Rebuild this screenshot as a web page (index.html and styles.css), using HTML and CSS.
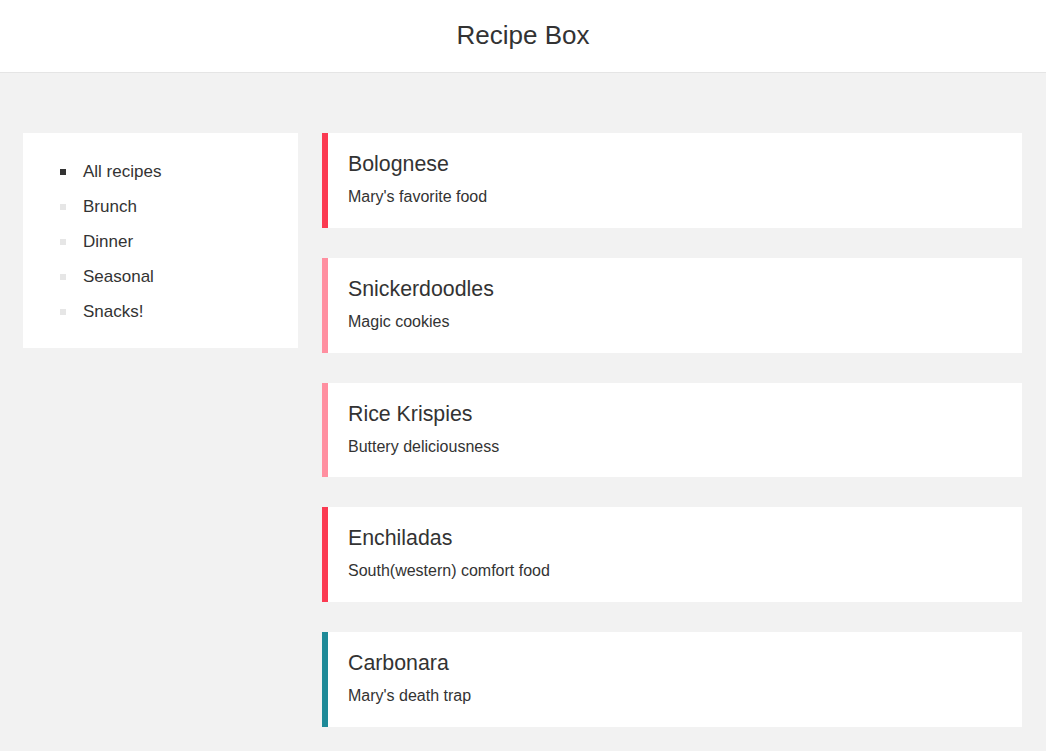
FILE: index.html
```html
<!DOCTYPE html>
<html lang="en">
<head>
<meta charset="utf-8">
<title>Recipe Box</title>
<link rel="stylesheet" href="styles.css">
</head>
<body>
<header class="topbar"><h1 class="topbar-title">Recipe Box</h1></header>
<main class="layout">
  <nav class="sidebar">
    <ul class="cat-list">
      <li class="cat active">All recipes</li>
      <li class="cat">Brunch</li>
      <li class="cat">Dinner</li>
      <li class="cat">Seasonal</li>
      <li class="cat">Snacks!</li>
    </ul>
  </nav>
  <section class="recipes">
    <article class="card red"><h2 class="card-title">Bolognese</h2><p class="card-desc">Mary's favorite food</p></article>
    <article class="card pink"><h2 class="card-title">Snickerdoodles</h2><p class="card-desc">Magic cookies</p></article>
    <article class="card pink"><h2 class="card-title">Rice Krispies</h2><p class="card-desc">Buttery deliciousness</p></article>
    <article class="card red"><h2 class="card-title">Enchiladas</h2><p class="card-desc">South(western) comfort food</p></article>
    <article class="card teal"><h2 class="card-title">Carbonara</h2><p class="card-desc">Mary's death trap</p></article>
  </section>
</main>
</body>
</html>
```
FILE: styles.css
```css
* { box-sizing: border-box; }
html, body { margin: 0; padding: 0; }
body {
  background: #f2f2f2;
  font-family: "Liberation Sans", Arial, sans-serif;
  color: #333;
}
.topbar {
  background: #fff;
  height: 73px;
  border-bottom: 1px solid #e5e5e5;
  text-align: center;
}
.topbar-title {
  margin: 0;
  font-size: 26px;
  font-weight: normal;
  line-height: 70px;
}
.layout {
  display: flex;
  align-items: flex-start;
  gap: 24px;
  padding: 60px 24px 24px 23px;
}
.sidebar {
  background: #fff;
  width: 275px;
  flex: none;
}
.cat-list {
  list-style: none;
  margin: 0;
  padding: 21px 0 19px 37px;
}
.cat {
  display: flex;
  align-items: center;
  gap: 17px;
  font-size: 17px;
  line-height: 35px;
}
.cat::before {
  content: "";
  width: 6px;
  height: 6px;
  background: #e6e6e6;
  flex: none;
}
.cat.active::before { background: #333; }
.recipes {
  flex: 1;
  display: flex;
  flex-direction: column;
  gap: 30px;
}
.card {
  background: #fff;
  border-left: 6px solid #fb3a52;
  padding: 19px 20px 18.75px;
}
.card.red { border-left-color: #fb3a52; }
.card.pink { border-left-color: #ff8fa0; }
.card.teal { border-left-color: #1e8a98; }
.card-title {
  margin: 0 0 9px;
  font-size: 21.33px;
  font-weight: normal;
  line-height: 24px;
}
.card-desc {
  margin: 0;
  font-size: 16px;
  line-height: 24px;
}
```
